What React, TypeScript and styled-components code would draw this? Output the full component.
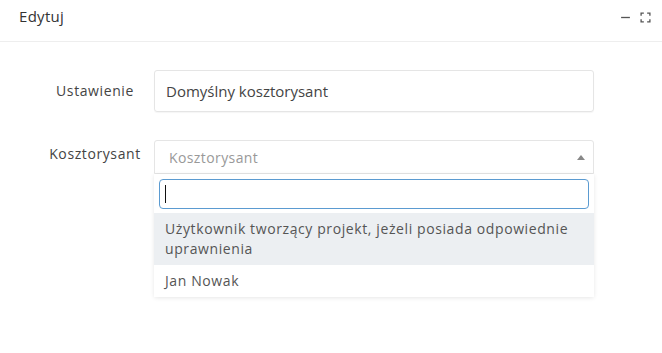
import React from 'react';
import styled, { createGlobalStyle } from 'styled-components';

const GlobalStyle = createGlobalStyle`
  html, body {
    margin: 0;
    padding: 0;
    background: #fff;
    font-family: 'Open Sans', 'Liberation Sans', sans-serif;
    color: #444;
  }
`;

const Panel = styled.div`
  width: 662px;
  height: 353px;
  background: #fff;
`;

const Header = styled.div`
  display: flex;
  align-items: flex-start;
  justify-content: space-between;
  height: 42px;
  padding: 6px 11px 0 19px;
  box-sizing: border-box;
  border-bottom: 1px solid #eeeeee;
`;

const Title = styled.span`
  font-size: 15px;
  letter-spacing: 0.3px;
  color: #333;
`;

const Tools = styled.div`
  display: flex;
  align-items: center;
  gap: 9px;
  padding-top: 6px;
`;

const ToolIcon = styled.svg`
  width: 11px;
  height: 11px;
  color: #555;
`;

const Form = styled.div`
  display: grid;
  grid-template-columns: 118px 440px;
  row-gap: 28px;
  padding: 28px 0 0 36px;
`;

const Label = styled.div<{ $top: number }>`
  text-align: center;
  font-size: 14px;
  letter-spacing: 0.6px;
  color: #444;
  padding-top: ${(p) => p.$top}px;
`;

const Field = styled.div`
  position: relative;
`;

const TextInput = styled.div`
  height: 42px;
  box-sizing: border-box;
  border: 1px solid #e5e5e5;
  border-radius: 3px;
  box-shadow: 0 1px 1px rgba(0, 0, 0, 0.04);
  display: flex;
  align-items: center;
  padding-left: 11px;
  font-size: 15px;
  color: #444;
`;

const Select = styled.div`
  height: 34px;
  box-sizing: border-box;
  border: 1px solid #e5e5e5;
  border-radius: 3px 3px 0 0;
  display: flex;
  align-items: center;
  justify-content: space-between;
  padding: 0 8px 0 14px;
  font-size: 14px;
  letter-spacing: 0.4px;
  color: #999;
`;

const Arrow = styled.span`
  width: 0;
  height: 0;
  border-left: 4px solid transparent;
  border-right: 4px solid transparent;
  border-bottom: 5px solid #888;
`;

const Dropdown = styled.div`
  background: #fff;
  box-shadow: 0 1px 4px rgba(0, 0, 0, 0.1);
  border-radius: 0 0 3px 3px;
  padding-top: 5px;
`;

const Search = styled.div`
  margin: 0 5px 4px;
  height: 30px;
  box-sizing: border-box;
  border: 1px solid #5b9bd1;
  border-radius: 4px;
  display: flex;
  align-items: center;
  padding-left: 5px;
`;

const Caret = styled.span`
  width: 1px;
  height: 18px;
  background: #111;
`;

const Option = styled.div<{ $active?: boolean }>`
  padding: 6px 11px;
  font-size: 14px;
  letter-spacing: 0.6px;
  line-height: 20px;
  color: #555;
  background: ${(p) => (p.$active ? '#eceff2' : '#fff')};
`;

export default function App() {
  return (
    <Panel>
      <GlobalStyle />
      <Header>
        <Title>Edytuj</Title>
        <Tools>
          <ToolIcon viewBox="0 0 10 10">
            <path d="M1 5H9" stroke="currentColor" strokeWidth="1.2" />
          </ToolIcon>
          <ToolIcon viewBox="0 0 10 10" fill="none">
            <path
              d="M1 3.5V1H3.5M6.5 1H9V3.5M9 6.5V9H6.5M3.5 9H1V6.5"
              stroke="currentColor"
              strokeWidth="1.2"
            />
          </ToolIcon>
        </Tools>
      </Header>
      <Form>
        <Label $top={11}>Ustawienie</Label>
        <Field>
          <TextInput>Domyślny kosztorysant</TextInput>
        </Field>
        <Label $top={4}>Kosztorysant</Label>
        <Field>
          <Select>
            Kosztorysant
            <Arrow />
          </Select>
          <Dropdown>
            <Search>
              <Caret />
            </Search>
            <Option $active>
              Użytkownik tworzący projekt, jeżeli posiada odpowiednie uprawnienia
            </Option>
            <Option>Jan Nowak</Option>
          </Dropdown>
        </Field>
      </Form>
    </Panel>
  );
}
